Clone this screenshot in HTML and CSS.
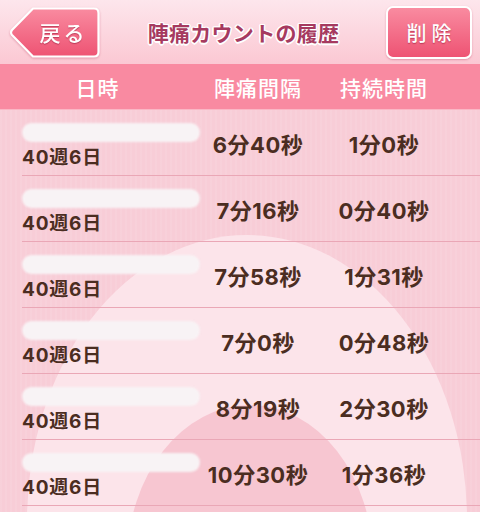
FILE: index.html
```html
<!DOCTYPE html>
<html lang="ja">
<head>
<meta charset="utf-8">
<title>陣痛カウントの履歴</title>
<link rel="stylesheet" href="styles.css">
</head>
<body>
<div class="app">
  <header class="topbar">
    <button class="back">
      <svg class="back-shape" viewBox="0 0 93 53" width="93" height="53">
        <defs>
          <linearGradient id="bg1" x1="0" y1="0" x2="0" y2="1">
            <stop offset="0" stop-color="#f98ba0"/>
            <stop offset="1" stop-color="#ee5373"/>
          </linearGradient>
        </defs>
        <path d="M25,2.5 H86 Q90.5,2.5 90.5,7 V46 Q90.5,50.5 86,50.5 H25 L4,29 Q2,26.5 4,24 Z" fill="url(#bg1)" stroke="#fff" stroke-width="2.2" stroke-linejoin="round"/>
      </svg>
      <span class="back-label">戻る</span>
    </button>
    <h1 class="title">陣痛カウントの履歴</h1>
    <button class="del">削除</button>
  </header>

  <div class="colhead">
    <div class="ch">日時</div>
    <div class="ch">陣痛間隔</div>
    <div class="ch">持続時間</div>
  </div>

  <main class="list">
    <svg class="deco" viewBox="0 0 480 402" width="480" height="402">
      <ellipse cx="247" cy="410" rx="220" ry="285" fill="#fce4ea"/>
      <ellipse cx="250" cy="452" rx="123" ry="157" fill="#f7c6d1"/>
    </svg>
    <div class="row">
      <div class="date"><span class="blob"></span><span class="week">40週6日</span></div>
      <div class="val">6分40秒</div>
      <div class="val">1分0秒</div>
    </div>
    <div class="row">
      <div class="date"><span class="blob"></span><span class="week">40週6日</span></div>
      <div class="val">7分16秒</div>
      <div class="val">0分40秒</div>
    </div>
    <div class="row">
      <div class="date"><span class="blob"></span><span class="week">40週6日</span></div>
      <div class="val">7分58秒</div>
      <div class="val">1分31秒</div>
    </div>
    <div class="row">
      <div class="date"><span class="blob"></span><span class="week">40週6日</span></div>
      <div class="val">7分0秒</div>
      <div class="val">0分48秒</div>
    </div>
    <div class="row">
      <div class="date"><span class="blob"></span><span class="week">40週6日</span></div>
      <div class="val">8分19秒</div>
      <div class="val">2分30秒</div>
    </div>
    <div class="row">
      <div class="date"><span class="blob"></span><span class="week">40週6日</span></div>
      <div class="val">10分30秒</div>
      <div class="val">1分36秒</div>
    </div>
  </main>
</div>
</body>
</html>
```
FILE: styles.css
```css
* { box-sizing: border-box; }
html, body {
  margin: 0;
  padding: 0;
  width: 480px;
  height: 512px;
  overflow: hidden;
  font-family: "Noto Sans CJK JP", "Noto Sans", sans-serif;
}
.app {
  width: 480px;
  height: 512px;
  display: flex;
  flex-direction: column;
  background: #f8cdd7;
}
.topbar {
  height: 64px;
  flex: none;
  display: flex;
  align-items: center;
  padding: 0 8px;
  background: linear-gradient(#fde6ec, #fbc8d3);
}
.back {
  position: relative;
  width: 93px;
  height: 53px;
  padding: 0 0 0 18px;
  margin: 0;
  border: 0;
  background: none;
  display: flex;
  align-items: center;
  justify-content: center;
  filter: drop-shadow(0 1px 1px rgba(200, 80, 110, 0.45));
}
.back-shape {
  position: absolute;
  left: 0;
  top: 0;
}
.back-label, .del {
  position: relative;
  color: #fff;
  font-family: "Noto Sans CJK JP", sans-serif;
  font-size: 21px;
  font-weight: 500;
  letter-spacing: 3px;
  text-shadow: 0 1px 1px rgba(150, 30, 60, 0.6);
}
.title {
  flex: 1;
  margin: 0;
  text-align: center;
  font-size: 21px;
  font-weight: 700;
  color: #a63a60;
  letter-spacing: 0.3px;
  text-shadow:
    1.5px 0 0 #fff, -1.5px 0 0 #fff, 0 1.5px 0 #fff, 0 -1.5px 0 #fff,
    1px 1px 0 #fff, -1px -1px 0 #fff, 1px -1px 0 #fff, -1px 1px 0 #fff;
}
.del {
  width: 86px;
  height: 53px;
  margin: 0;
  padding: 0 0 0 5px;
  border: 2px solid #fff;
  border-radius: 7px;
  background: linear-gradient(#f98ba0, #ee5373);
  box-shadow: 0 1px 2px rgba(200, 80, 110, 0.45);
  letter-spacing: 5px;
  font-size: 20px;
}
.colhead {
  height: 46px;
  flex: none;
  display: grid;
  grid-template-columns: 195px 126px 126px 1fr;
  align-items: center;
  background: #f98aa1;
  border-bottom: 1px solid #fbb7c5;
}
.ch {
  text-align: center;
  color: #fff;
  font-size: 21px;
  font-weight: 500;
  letter-spacing: 1px;
}
.list {
  position: relative;
  flex: 1;
  padding-left: 22px;
  background-image: repeating-linear-gradient(90deg, rgba(255,255,255,0.07) 0 2px, rgba(0,0,0,0) 2px 5px);
  overflow: hidden;
}
.deco {
  position: absolute;
  left: 0;
  top: 0;
}
.row {
  position: relative;
  height: 66px;
  display: grid;
  grid-template-columns: 173px 126px 126px 1fr;
  align-items: center;
  border-bottom: 1px solid #eaa7b6;
}
.row:first-child { height: 65px; }
.date {
  position: relative;
  height: 100%;
  display: flex;
  flex-direction: column;
  justify-content: flex-start;
  padding-top: 13px;
}
.blob {
  display: block;
  width: 178px;
  height: 19px;
  border-radius: 10px;
  background: #f8f3f5;
  filter: blur(1px);
}
.week {
  margin-top: 6px;
  font-family: "Inter", "Noto Sans CJK JP", sans-serif;
  font-size: 19px;
  font-weight: 700;
  color: #4b2d21;
  letter-spacing: 0.8px;
  line-height: 19px;
}
.val {
  text-align: center;
  font-family: "Inter", "Noto Sans CJK JP", sans-serif;
  font-size: 22px;
  font-weight: 700;
  color: #4b2d21;
  letter-spacing: 0.5px;
  padding-top: 1px;
}
```
